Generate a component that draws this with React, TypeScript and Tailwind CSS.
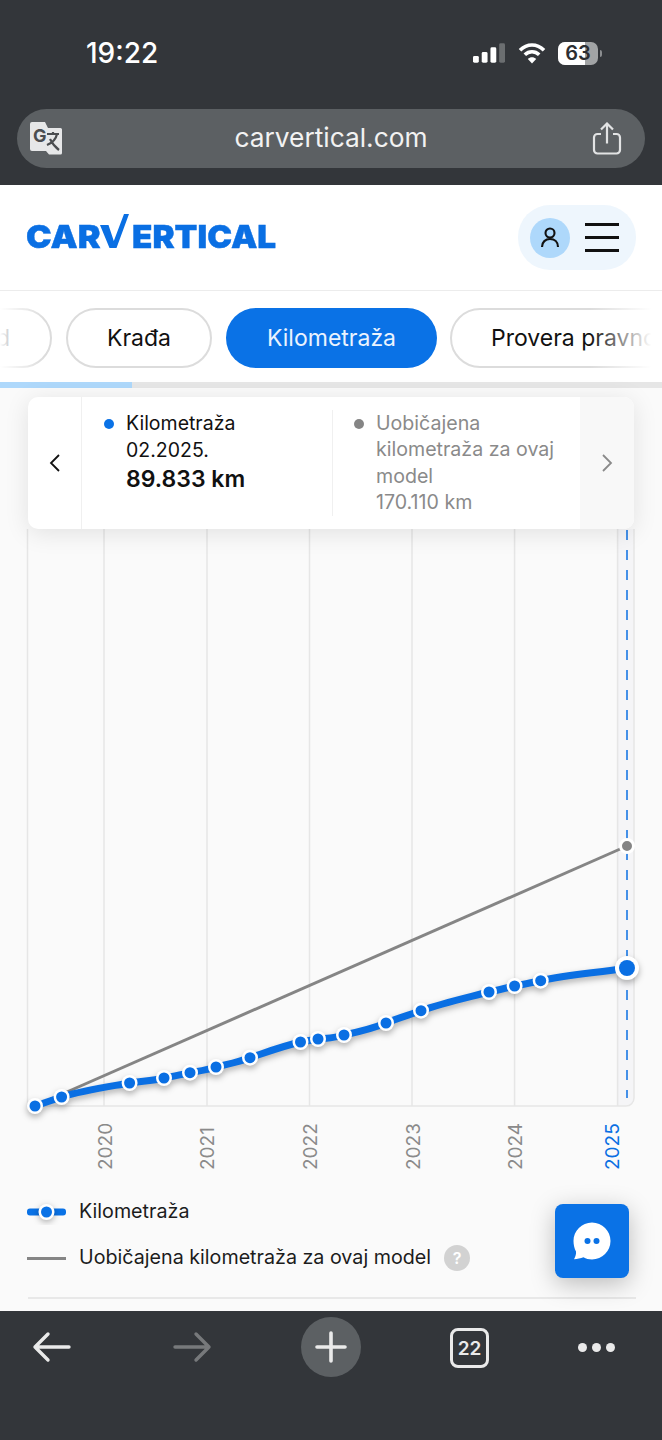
import React from "react";

const pts: [number, number][] = [
  [35, 1106], [61.6, 1097], [129.6, 1083], [164, 1078], [190, 1072.7], [216, 1067], [250, 1057.7],
  [300.5, 1042], [318, 1039], [344, 1035], [386, 1023], [421, 1010.7], [489, 992], [514.6, 986], [540.7, 980.7],
];
const grid = [104, 207, 309.5, 412, 514.6, 617.6];
const years: [string, number][] = [["2020", 105.5], ["2021", 207.5], ["2022", 310], ["2023", 413], ["2024", 515.5]];

function StatusIcons() {
  return (
    <div className="flex items-center">
      <svg width="32" height="20" viewBox="0 0 33 20" className="mr-[13px]">
        <rect x="0" y="13" width="6" height="7" rx="1.5" fill="#fff" />
        <rect x="9" y="9" width="6" height="11" rx="1.5" fill="#fff" />
        <rect x="18" y="4" width="6" height="16" rx="1.5" fill="#fff" />
        <rect x="27" y="0" width="6" height="20" rx="1.5" fill="#6b6e70" />
      </svg>
      <svg width="28" height="22" viewBox="0 0 28 22" className="mr-[12px]" fill="none" stroke="#fff" strokeWidth="3.6">
        <path d="M2 8.2C9 1.2 19 1.2 26 8.2" />
        <path d="M6.8 12.8C11 8.8 17 8.8 21.2 12.8" />
        <path d="M14 21.5L9.8 17C12.3 14.8 15.7 14.8 18.2 17Z" fill="#fff" stroke="none" />
      </svg>
      <div className="relative flex h-[23px] w-[40px] items-center justify-center overflow-hidden rounded-[7px] bg-[#a2a4a5]">
        <div className="absolute left-0 top-0 h-full w-[27px] bg-white" />
        <span className="relative text-[20px] font-semibold leading-none text-[#2c2e31]">63</span>
      </div>
      <div className="ml-[2px] h-[7px] w-[2px] rounded-r bg-[#8b8d8f]" />
    </div>
  );
}

function TranslateIcon() {
  return (
    <svg width="33" height="33" viewBox="0 0 33 33" className="mr-[7px]">
      <path d="M2 0H15L18 6H30.500a1.500 1.500 0 0 1 1.500 1.500V31a1.500 1.500 0 0 1-1.500 1.500H19L16 29H2a2 2 0 0 1-2-2V2a2 2 0 0 1 2-2Z" fill="#e6e7e8" />
      <text x="3" y="20" fontSize="18" fontWeight="700" fill="#4a4d50" fontFamily="Inter, sans-serif">G</text>
      <path d="M17 12H29M23 10V12M27 12C26 17 22 21 17 23M20 17C22 21 25 25 29 28" fill="none" stroke="#4a4d50" strokeWidth="2.2" />
    </svg>
  );
}

function Logo() {
  return (
    <div className="mb-[14px] flex h-[38px] items-start text-[32px] font-black leading-[24px] text-[#0a6fe3] [-webkit-text-stroke:0.4px_#0a6fe3]">
      <span className="mt-[13px] w-[73px] shrink-0 origin-left scale-x-[1.07]">CAR</span>
      <svg width="33" height="38" viewBox="0 0 33 38" className="shrink-0">
        <path d="M1 13H9.500L14.800 29L25 2H30L17.500 36H10.500Z" fill="#0a6fe3" />
      </svg>
      <span className="mt-[13px] origin-left scale-x-[1.04]">ERTICAL</span>
    </div>
  );
}

function Chart() {
  return (
    <svg width="662" height="668" viewBox="0 529 662 668" className="-mx-[28px] block max-w-none shrink-0">
      <path d="M617.600 529V1106H626a8 8 0 0 0 8-8V529Z" fill="#f5f5f7" />
      <path d="M27.500 529V1106H626a8 8 0 0 0 8-8V529" fill="none" stroke="#e6e6e6" strokeWidth="1.500" />
      {grid.map((x) => (
        <line key={x} x1={x} x2={x} y1="529" y2="1106" stroke="#e6e6e6" strokeWidth="1.500" />
      ))}
      <line x1="627" x2="627" y1="530" y2="1098" stroke="#0a6fe3" strokeWidth="1.500" strokeDasharray="10 10" />
      <line x1="35" y1="1106" x2="627" y2="846" stroke="#858585" strokeWidth="3" />
      <circle cx="627" cy="846" r="6.500" fill="#858585" stroke="#fff" strokeWidth="3" />
      <g className="drop-shadow-[0_3px_3px_rgba(0,0,0,0.3)]">
        <path
          d="M35 1106L61.600 1097C84 1090 107 1087 129.600 1083C141 1081 152 1081 164 1078C173 1076 181 1075 190 1072.700C199 1071 207 1070 216 1067C228 1064 239 1062 250 1057.700C267 1052 283 1046 300.500 1042C306 1041 312 1040 318 1039C327 1038 335 1038 344 1035C358 1032 372 1029 386 1023C398 1018 409 1015 421 1010.700C443 1003 466 998 489 992C498 990 506 988 514.600 986C523 984 532 983 540.700 980.700C569 974 598 973 627 968"
          fill="none"
          stroke="#0a6fe3"
          strokeWidth="7"
        />
        {pts.map(([x, y]) => (
          <g key={x}>
            <circle cx={x} cy={y} r="8" fill="#fff" />
            <circle cx={x} cy={y} r="5.500" fill="#0a6fe3" />
          </g>
        ))}
        <circle cx="627" cy="968" r="12" fill="#fff" />
        <circle cx="627" cy="968" r="8" fill="#0a6fe3" />
      </g>
      {years.map(([y, x]) => (
        <text key={y} transform={`translate(${x + 6.5} 1170) rotate(-90)`} fontSize="19" fill="#8a8a8a" fontFamily="Inter, sans-serif">
          {y}
        </text>
      ))}
      <text transform="translate(619 1170) rotate(-90)" fontSize="19" fill="#0a6fe3" fontFamily="Inter, sans-serif">
        2025
      </text>
    </svg>
  );
}

export default function App() {
  return (
    <div className="relative flex h-[1440px] w-[662px] flex-col overflow-hidden bg-[#fafafa] font-[Inter,sans-serif]">
      {/* Browser top */}
      <div className="h-[185px] shrink-0 bg-[#33363a]">
        <div className="flex h-[109px] items-center justify-between pb-[3px] pl-[86px] pr-[60px]">
          <span className="text-[28px] font-medium leading-none text-white">19:22</span>
          <StatusIcons />
        </div>
        <div className="mx-[17px] flex h-[59px] items-center justify-between rounded-[30px] bg-[#5c6063] pl-[13px] pr-[23px]">
          <TranslateIcon />
          <span className="text-[26.300px] leading-none text-[#f2f2f2]">carvertical.com</span>
          <svg width="30" height="33" viewBox="0 0 30 33" fill="none" stroke="#e2e3e4" strokeWidth="2.200">
            <path d="M9 12H5.500a3.500 3.500 0 0 0-3.500 3.500V28a3.500 3.500 0 0 0 3.500 3.500h19A3.500 3.500 0 0 0 28 28V15.500a3.500 3.500 0 0 0-3.500-3.500H21" />
            <path d="M15 21.500V1.500M9 7.500L15 1.500L21 7.500" />
          </svg>
        </div>
      </div>

      {/* Site header */}
      <div className="flex h-[106px] shrink-0 items-center justify-between border-b border-[#ececec] bg-white pl-[26px] pr-[26px]">
        <Logo />
        <div className="flex h-[65px] w-[118px] items-center rounded-[32px] bg-[#eef6fd] pl-[12px]">
          <div className="flex h-[40px] w-[40px] items-center justify-center rounded-full bg-[#aed8fb]">
            <svg width="20" height="22" viewBox="0 0 20 22" fill="none" stroke="#111" strokeWidth="2.100">
              <circle cx="10" cy="6" r="4.500" />
              <path d="M2 20c0-5 3.500-8 8-8s8 3 8 8" />
            </svg>
          </div>
          <div className="ml-[15px] flex w-[34px] flex-col gap-[10px]">
            <div className="h-[3px] bg-[#111]" />
            <div className="h-[3px] bg-[#111]" />
            <div className="h-[3px] bg-[#111]" />
          </div>
        </div>
      </div>

      {/* Tabs */}
      <div className="h-[97px] shrink-0 bg-white">
        <div className="relative flex h-[91px] items-start gap-[14px] overflow-hidden pt-[17px] text-[23px]">
          <div className="-ml-[112px] flex h-[60px] w-[164px] shrink-0 items-center justify-end rounded-[30px] border-2 border-[#dcdcdc] pr-[40px] text-[#111]">
            Pregled
          </div>
          <div className="flex h-[60px] w-[146px] shrink-0 items-center justify-center rounded-[30px] border-2 border-[#dcdcdc] text-[#111]">
            Krađa
          </div>
          <div className="-mr-[1px] flex h-[60px] w-[211px] shrink-0 items-center justify-center rounded-[30px] bg-[#0a72e6] text-[#eaf3fe]">
            Kilometraža
          </div>
          <div className="flex h-[60px] w-[350px] shrink-0 items-center whitespace-nowrap rounded-[30px] border-2 border-[#dcdcdc] pl-[39px] text-[#111]">
            Provera pravnog statusa
          </div>
          <div className="absolute left-0 top-0 h-full w-[44px] bg-gradient-to-r from-white to-transparent" />
          <div className="absolute right-0 top-0 h-full w-[72px] bg-gradient-to-l from-white from-15% to-transparent" />
        </div>
        <div className="h-[6px] bg-[#e6e6e6]">
          <div className="h-full w-[132px] bg-[#aed8fb]" />
        </div>
      </div>

      {/* Content */}
      <div className="relative flex-1 px-[28px] pt-[9px]">
        <div className="relative z-10 flex h-[132px] w-[606px] overflow-hidden rounded-[10px] bg-white shadow-[0_4px_24px_rgba(0,0,0,0.1)]">
          <div className="flex w-[54px] shrink-0 items-center justify-center border-r border-[#f0f0f0]">
            <svg width="14" height="20" viewBox="0 0 14 20" fill="none" stroke="#111" strokeWidth="1.800">
              <path d="M11 2L3 10L11 18" />
            </svg>
          </div>
          <div className="flex w-[250px] shrink-0 items-start py-[13px] pl-[22px] text-[19.500px] leading-[27px]">
            <span className="mr-[12px] mt-[9px] h-[10px] w-[10px] shrink-0 rounded-full bg-[#0a72e6]" />
            <div className="text-[#111]">
              <div>Kilometraža</div>
              <div>02.2025.</div>
              <div className="mt-[2px] text-[23px] font-semibold">89.833 km</div>
            </div>
          </div>
          <div className="my-[13px] w-px shrink-0 bg-[#f0f0f0]" />
          <div className="flex w-[247px] shrink-0 items-start pl-[21px] pt-[13px] text-[19.600px] leading-[26.300px] text-[#8a8a8a]">
            <span className="mr-[12px] mt-[9px] h-[10px] w-[10px] shrink-0 rounded-full bg-[#858585]" />
            <div>
              <div>Uobičajena</div>
              <div className="whitespace-nowrap">kilometraža za ovaj</div>
              <div>model</div>
              <div>170.110 km</div>
            </div>
          </div>
          <div className="flex flex-1 items-center justify-center bg-[#f8f8f8]">
            <svg width="14" height="20" viewBox="0 0 14 20" fill="none" stroke="#8a8a8a" strokeWidth="1.800">
              <path d="M3 2L11 10L3 18" />
            </svg>
          </div>
        </div>

        <Chart />

        {/* Legend */}
        <div className="flex flex-col gap-[16px] text-[19.700px] text-[#1c1c1c]">
          <div className="flex h-[30px] items-center gap-[13px]">
            <svg width="39" height="26" viewBox="0 0 39 26" className="-ml-[1px] shrink-0">
              <rect x="0" y="9.500" width="39" height="7" rx="3" fill="#0a72e6" />
              <g className="drop-shadow-[0_2px_3px_rgba(0,0,0,0.3)]">
                <circle cx="19.500" cy="13" r="8" fill="#fff" />
                <circle cx="19.500" cy="13" r="5.500" fill="#0a72e6" />
              </g>
            </svg>
            Kilometraža
          </div>
          <div className="flex h-[30px] items-center gap-[13px]">
            <div className="-ml-[1px] h-[3px] w-[39px] shrink-0 bg-[#858585]" />
            <span className="whitespace-nowrap">Uobičajena kilometraža za ovaj model</span>
            <span className="flex h-[26px] w-[26px] shrink-0 items-center justify-center rounded-full bg-[#d2d2d2] text-[16px] font-semibold text-white">
              ?
            </span>
          </div>
        </div>
        <div className="mt-[24px] h-[2px] w-[608px] bg-[#e8e8e8]" />

        {/* Chat bubble */}
        <div className="absolute bottom-[33px] left-[555px] flex h-[74px] w-[74px] items-center justify-center rounded-[8px] bg-[#0a72e6] shadow-[0_6px_24px_rgba(0,0,0,0.25)]">
          <svg width="38" height="38" viewBox="0 0 38 38">
            <path d="M19 0.500C29.200 0.500 37.500 8.800 37.500 19C37.500 29.200 29.200 37.500 19 37.500C15.800 37.500 13 36.700 10.500 35.300C7.500 36.500 4.500 37 1 37.200C2.500 34.500 3.300 32 3 29.500C1.400 26.500 0.500 22.800 0.500 19C0.500 8.800 8.800 0.500 19 0.500Z" fill="#fff" />
            <circle cx="14.500" cy="19" r="3" fill="#0a72e6" />
            <circle cx="23.500" cy="19" r="3" fill="#0a72e6" />
          </svg>
        </div>
      </div>

      {/* Browser bottom */}
      <div className="flex h-[129px] shrink-0 items-start bg-[#33363a] pl-[32px] pt-[6px]">
        <div className="flex h-[60px] items-center">
          <svg width="40" height="32" viewBox="0 0 40 32" fill="none" stroke="#eaeaea" strokeWidth="3.400" strokeLinecap="round" strokeLinejoin="round">
            <path d="M37 16H3M16 3L3 16L16 29" />
          </svg>
        </div>
        <div className="ml-[100px] flex h-[60px] items-center">
          <svg width="40" height="32" viewBox="0 0 40 32" fill="none" stroke="#77797b" strokeWidth="3.400" strokeLinecap="round" strokeLinejoin="round">
            <path d="M3 16H37M24 3L37 16L24 29" />
          </svg>
        </div>
        <div className="ml-[89px] flex h-[60px] w-[60px] items-center justify-center rounded-full bg-[#5c6063]">
          <svg width="32" height="32" viewBox="0 0 32 32" stroke="#eaeaea" strokeWidth="3.600" strokeLinecap="round">
            <path d="M16 2V30M2 16H30" />
          </svg>
        </div>
        <div className="ml-[89px] mt-[11px] flex h-[40px] w-[39px] items-center justify-center rounded-[8px] border-[3px] border-[#eaeaea] text-[19px] font-semibold leading-none text-[#eaeaea]">
          22
        </div>
        <div className="ml-[89px] flex h-[60px] items-center gap-[5px]">
          <span className="h-[9px] w-[9px] rounded-full bg-[#eaeaea]" />
          <span className="h-[9px] w-[9px] rounded-full bg-[#eaeaea]" />
          <span className="h-[9px] w-[9px] rounded-full bg-[#eaeaea]" />
        </div>
      </div>
    </div>
  );
}
